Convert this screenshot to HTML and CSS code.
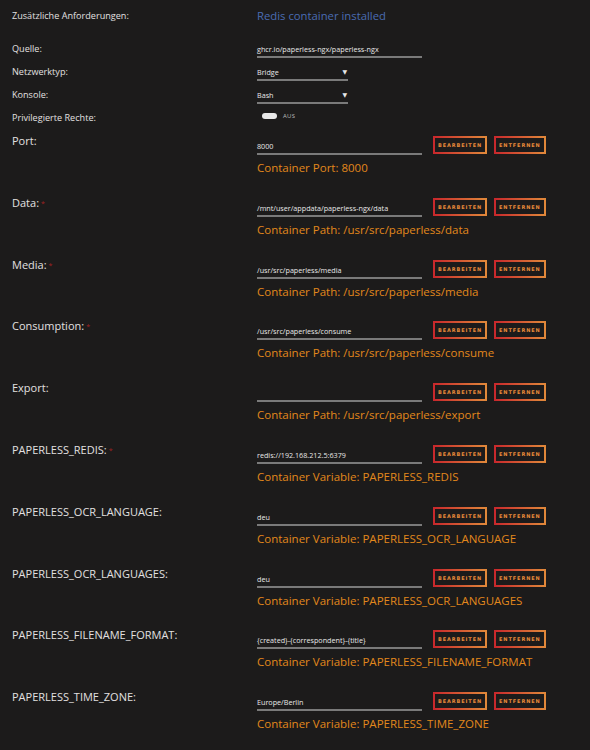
FILE: index.html
```html
<!DOCTYPE html>
<html lang="de">
<head>
  <meta charset="UTF-8" />
  <title>Container bearbeiten</title>
  <link rel="stylesheet" href="styles.css">
</head>
<body>

  <div class="form">
    <div class="top first">
      <span class="small">Zusätzliche Anforderungen:</span>
      <span class="redis">Redis container installed</span>
    </div>
    <div class="top">
      <span class="small">Quelle:</span>
      <div class="line wide">ghcr.io/paperless-ngx/paperless-ngx</div>
    </div>
    <div class="top">
      <span class="small">Netzwerktyp:</span>
      <div class="line select">Bridge <span class="arrow">&#9660;</span></div>
    </div>
    <div class="top">
      <span class="small">Konsole:</span>
      <div class="line select">Bash <span class="arrow">&#9660;</span></div>
    </div>
    <div class="top">
      <span class="small">Privilegierte Rechte:</span>
      <div class="switch"><span class="knob"></span><span class="off">AUS</span></div>
    </div>

    <div class="rows">
      <div class="row">
        <span class="label">Port:</span>
        <div class="field">
          <div class="inputs">
            <div class="line wide">8000</div>
            <button class="btn">BEARBEITEN</button>
            <button class="btn">ENTFERNEN</button>
          </div>
          <div class="desc">Container Port: 8000</div>
        </div>
      </div>

      <div class="row">
        <span class="label">Data:<span class="req">*</span></span>
        <div class="field">
          <div class="inputs">
            <div class="line wide">/mnt/user/appdata/paperless-ngx/data</div>
            <button class="btn">BEARBEITEN</button>
            <button class="btn">ENTFERNEN</button>
          </div>
          <div class="desc">Container Path: /usr/src/paperless/data</div>
        </div>
      </div>

      <div class="row">
        <span class="label">Media:<span class="req">*</span></span>
        <div class="field">
          <div class="inputs">
            <div class="line wide">/usr/src/paperless/media</div>
            <button class="btn">BEARBEITEN</button>
            <button class="btn">ENTFERNEN</button>
          </div>
          <div class="desc">Container Path: /usr/src/paperless/media</div>
        </div>
      </div>

      <div class="row">
        <span class="label">Consumption:<span class="req">*</span></span>
        <div class="field">
          <div class="inputs">
            <div class="line wide">/usr/src/paperless/consume</div>
            <button class="btn">BEARBEITEN</button>
            <button class="btn">ENTFERNEN</button>
          </div>
          <div class="desc">Container Path: /usr/src/paperless/consume</div>
        </div>
      </div>

      <div class="row">
        <span class="label">Export:</span>
        <div class="field">
          <div class="inputs">
            <div class="line wide"></div>
            <button class="btn">BEARBEITEN</button>
            <button class="btn">ENTFERNEN</button>
          </div>
          <div class="desc">Container Path: /usr/src/paperless/export</div>
        </div>
      </div>

      <div class="row">
        <span class="label">PAPERLESS_REDIS:<span class="req">*</span></span>
        <div class="field">
          <div class="inputs">
            <div class="line wide">redis://192.168.212.5:6379</div>
            <button class="btn">BEARBEITEN</button>
            <button class="btn">ENTFERNEN</button>
          </div>
          <div class="desc">Container Variable: PAPERLESS_REDIS</div>
        </div>
      </div>

      <div class="row">
        <span class="label">PAPERLESS_OCR_LANGUAGE:</span>
        <div class="field">
          <div class="inputs">
            <div class="line wide">deu</div>
            <button class="btn">BEARBEITEN</button>
            <button class="btn">ENTFERNEN</button>
          </div>
          <div class="desc">Container Variable: PAPERLESS_OCR_LANGUAGE</div>
        </div>
      </div>

      <div class="row">
        <span class="label">PAPERLESS_OCR_LANGUAGES:</span>
        <div class="field">
          <div class="inputs">
            <div class="line wide">deu</div>
            <button class="btn">BEARBEITEN</button>
            <button class="btn">ENTFERNEN</button>
          </div>
          <div class="desc">Container Variable: PAPERLESS_OCR_LANGUAGES</div>
        </div>
      </div>

      <div class="row">
        <span class="label">PAPERLESS_FILENAME_FORMAT:</span>
        <div class="field">
          <div class="inputs">
            <div class="line wide">{created}-{correspondent}-{title}</div>
            <button class="btn">BEARBEITEN</button>
            <button class="btn">ENTFERNEN</button>
          </div>
          <div class="desc">Container Variable: PAPERLESS_FILENAME_FORMAT</div>
        </div>
      </div>

      <div class="row">
        <span class="label">PAPERLESS_TIME_ZONE:</span>
        <div class="field">
          <div class="inputs">
            <div class="line wide">Europe/Berlin</div>
            <button class="btn">BEARBEITEN</button>
            <button class="btn">ENTFERNEN</button>
          </div>
          <div class="desc">Container Variable: PAPERLESS_TIME_ZONE</div>
        </div>
      </div>
    </div>
  </div>

</body>
</html>
```

FILE: styles.css
```css
body {
  margin: 0;
  background: #1c1b1b;
  font-family: "Open Sans", "DejaVu Sans", sans-serif;
  color: #e2e0e0;
}
.form {
  padding: 4px 0 0 12px;
}
.top {
  display: grid;
  grid-template-columns: 245px 1fr;
  align-items: center;
  height: 23px;
}
.top.first {
  height: 22px;
  margin-bottom: 11px;
}
.small {
  font-size: 9.1px;
}
.redis {
  font-size: 11.3px;
  color: #4a6cb3;
}
.line {
  font-size: 7.2px;
  height: 18px;
  line-height: 18px;
  box-sizing: border-box;
  border-bottom: 2px solid #7a7a7a;
  color: #e8e8e8;
}
.wide {
  width: 165px;
}
.select {
  width: 91px;
  display: flex;
  justify-content: space-between;
}
.arrow {
  font-size: 6px;
  padding-right: 1px;
}
.switch {
  display: flex;
  align-items: center;
  gap: 6px;
  padding-left: 5px;
  margin-top: -3px;
}
.knob {
  width: 15px;
  height: 6px;
  border-radius: 3px;
  background: #e8e8e8;
}
.off {
  font-size: 6px;
  color: #bbb;
  letter-spacing: 0.3px;
}
.rows {
  padding-top: 3px;
}
.row {
  display: grid;
  grid-template-columns: 245px 1fr;
  height: 61.8px;
}
.label {
  font-size: 11px;
  line-height: 16px;
  margin-top: 1px;
}
.req {
  color: #a02222;
  font-size: 7px;
  vertical-align: 1px;
  margin-left: 2px;
}
.field {
  padding-top: 4px;
}
.inputs {
  display: flex;
  align-items: flex-start;
}
.inputs .wide {
  margin-top: 1px;
}
.btn {
  height: 18px;
  padding: 0 3px;
  background: #1c1b1b;
  border: 2px solid;
  border-image: linear-gradient(90deg, #c8282c, #e0883a) 1;
  color: #e88a3a;
  font-family: "DejaVu Sans", sans-serif;
  font-weight: bold;
  font-size: 5px;
  letter-spacing: 0.9px;
  margin-left: 11px;
  line-height: 14px;
}
.btn + .btn {
  margin-left: 7px;
}
.desc {
  color: #e2881c;
  font-size: 11.5px;
  line-height: 16px;
  margin-top: 5px;
}
```
